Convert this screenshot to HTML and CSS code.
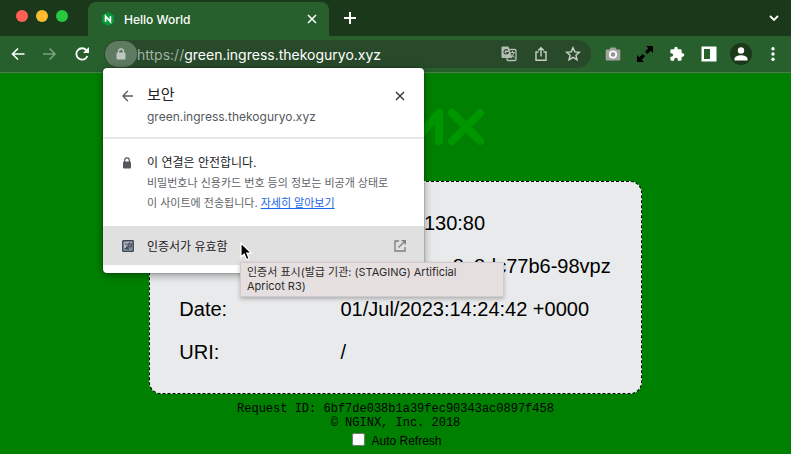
FILE: index.html
```html
<!DOCTYPE html>
<html lang="ko">
<head>
<meta charset="utf-8">
<meta name="viewport" content="width=device-width, initial-scale=1">
<title>Hello World</title>
<link rel="stylesheet" href="styles.css">
</head>
<body>
<header class="browser">
  <div class="tabstrip">
    <div class="lights"><span class="light red"></span><span class="light amber"></span><span class="light lime"></span></div>
    <div class="tab">
      <svg class="favicon" width="14" height="14" viewBox="0 0 14 14"><path d="M7 0l6 3.500v7L7 14 1 10.500v-7z" fill="#059a3b"/><path d="M4.600 9.800V4.300l4.800 5.400V4.200" fill="none" stroke="#fff" stroke-width="1.700"/></svg>
      <span class="tab-title">Hello World</span>
      <button class="icon-btn" aria-label="탭 닫기"><svg width="10" height="10" viewBox="0 0 10 10"><path d="M1 1l8 8M9 1L1 9" stroke="#fff" stroke-width="1.500"/></svg></button>
    </div>
    <button class="icon-btn new-tab" aria-label="새 탭"><svg width="14" height="14" viewBox="0 0 14 14"><path d="M7 1v12M1 7h12" stroke="#fff" stroke-width="2"/></svg></button>
    <button class="icon-btn tab-search" aria-label="탭 검색"><svg width="10" height="8" viewBox="0 0 10 8"><path d="M1 2l4 4 4-4" fill="none" stroke="#fff" stroke-width="1.800"/></svg></button>
  </div>
  <div class="toolbar">
    <nav class="nav">
      <button class="icon-btn" aria-label="뒤로"><svg width="14" height="14" viewBox="0 0 14 14"><path d="M13.500 7H1.500M7 1.500L1.500 7 7 12.500" fill="none" stroke="#fff" stroke-width="1.600"/></svg></button>
      <button class="icon-btn" aria-label="앞으로"><svg width="14" height="14" viewBox="0 0 14 14"><path d="M0 7h12M6.500 1.500L12 7l-5.500 5.500" fill="none" stroke="#7fa082" stroke-width="1.600"/></svg></button>
      <button class="icon-btn" aria-label="새로고침"><svg width="14" height="14" viewBox="0 0 14 14"><path d="M12.400 9A5.700 5.700 0 1 1 11.400 3.200L12.800 4.600" fill="none" stroke="#fff" stroke-width="1.800"/><path d="M14 0v6H8z" fill="#fff"/></svg></button>
    </nav>
    <div class="address">
      <button class="lock-btn" aria-label="사이트 정보 보기"><svg width="10" height="12" viewBox="0 0 10 12"><path d="M2.500 5V3.500a2.500 2.500 0 0 1 5 0V5" fill="none" stroke="#bfc8c0" stroke-width="1.300"/><rect x=".5" y="4.500" width="9" height="7" rx="1" fill="#bfc8c0"/></svg></button>
      <span class="url"><span class="scheme">https://</span>green.ingress.thekoguryo.xyz</span>
      <div class="address-actions">
        <button class="icon-btn" aria-label="번역"><svg width="16" height="16" viewBox="0 0 16 16"><rect x="6" y="3.500" width="9" height="11" rx="1" fill="none" stroke="#b5bdb5" stroke-width="1.300"/><path d="M1.500.5h6L11 12H1.500a1 1 0 0 1-1-1v-9.500a1 1 0 0 1 1-1z" fill="#b5bdb5"/><path d="M6.800 4.300A2.200 2.200 0 1 0 7.300 6.500H5.200" fill="none" stroke="#284a2a" stroke-width="1.100"/><path d="M9 6.500h5M11.500 5v1.500M13 6.500c-.3 2-1.500 3.500-3 4.500M10.500 8.500c.8 1.500 2 2.500 3 3" fill="none" stroke="#b5bdb5" stroke-width="1.100"/></svg></button>
        <button class="icon-btn" aria-label="공유"><svg width="16" height="16" viewBox="0 0 16 16"><path d="M5.500 6H3v8.300h10V6h-2.500M8 10.500V2M5.200 4.500L8 1.700l2.800 2.800" fill="none" stroke="#c8d0c8" stroke-width="1.400"/></svg></button>
        <button class="icon-btn" aria-label="북마크"><svg width="16" height="16" viewBox="0 0 16 16"><path d="M8 1.700l1.800 4.200 4.600.4-3.500 3 1.100 4.500L8 11.400l-4 2.400 1.100-4.500-3.500-3 4.600-.4z" fill="none" stroke="#cbd3cb" stroke-width="1.400"/></svg></button>
      </div>
      <section class="popup" aria-label="보안">
        <div class="popup-head">
          <button class="icon-btn" aria-label="돌아가기"><svg width="12" height="12" viewBox="0 0 12 12"><path d="M11 6H1M5.800 1L.8 6l5 5" fill="none" stroke="#55595e" stroke-width="1.300"/></svg></button>
          <div class="popup-titles"><h2>보안</h2><p class="host">green.ingress.thekoguryo.xyz</p></div>
          <button class="icon-btn popup-close" aria-label="닫기"><svg width="10" height="10" viewBox="0 0 10 10"><path d="M1 1l8 8M9 1L1 9" stroke="#303338" stroke-width="1.400"/></svg></button>
        </div>
        <div class="popup-body">
          <svg class="body-lock" width="10" height="12" viewBox="0 0 10 12"><path d="M2.700 5V3.200a2.300 2.300 0 0 1 4.600 0V5" fill="none" stroke="#54585d" stroke-width="1.200"/><rect x="1" y="4.500" width="8" height="7" rx="1" fill="#54585d"/></svg>
          <div><h3>이 연결은 안전합니다.</h3><p class="detail">비밀번호나 신용카드 번호 등의 정보는 비공개 상태로<br>이 사이트에 전송됩니다. <a href="#">자세히 알아보기</a></p></div>
        </div>
        <div class="cert-wrap">
          <button class="cert">
            <svg width="12" height="12" viewBox="0 0 12 12"><rect x=".8" y=".8" width="10.400" height="10.400" rx=".5" fill="#aeb4bb" stroke="#3e4955" stroke-width="1.500"/><path d="M2.500 9.500V8h1.500V6.500h2V8l1 1.500z" fill="#3e4955"/><circle cx="7.800" cy="5" r="2" fill="#6d7882" stroke="#3e4955"/><path d="M6.800 7v3M9 7v2.500M3 4h2" stroke="#3e4955"/></svg>
            <span>인증서가 유효함</span>
            <svg class="external" width="12" height="12" viewBox="0 0 12 12"><path d="M5 1H1v10h10V7M7.500.7h3.800v3.800M11 1L4.500 7.500" fill="none" stroke="#7a7e83" stroke-width="1.300"/></svg>
          </button>
          <div class="tooltip" role="tooltip">인증서 표시(발급 기관: (STAGING) Artificial Apricot R3)</div>
          <svg class="cursor" width="13" height="19" viewBox="0 0 13 19"><path d="M1 1v14l3.200-3 2.300 5.500 2.600-1.100-2.300-5.300h4.500z" fill="#000" stroke="#fff" stroke-width="1.200"/></svg>
        </div>
      </section>
    </div>
    <div class="extensions">
      <button class="icon-btn" aria-label="스크린샷"><svg width="16" height="16" viewBox="0 0 16 16"><path d="M2 3.500h2.500L5.500 1.500h5l1 2H14a1.300 1.300 0 0 1 1.300 1.300v8.400a1.300 1.300 0 0 1-1.300 1.300H2A1.300 1.300 0 0 1 .7 13.200V4.800A1.300 1.300 0 0 1 2 3.500z" fill="#a3a5a3"/><circle cx="8" cy="8.500" r="3.200" fill="#929492" stroke="#fff" stroke-width="1.800"/></svg></button>
      <button class="icon-btn" aria-label="창 크기"><svg width="16" height="16" viewBox="0 0 16 16"><path d="M9 0h7v7l-2.300-2.300-3.400 3.300-2.300-2.300L11.300 2.300zM0 9l2.300 2.300 3.400-3.300 2.300 2.300L4.700 13.700 7 16H0z" fill="#000"/></svg></button>
      <button class="icon-btn" aria-label="확장 프로그램"><svg width="16" height="16" viewBox="0 0 24 24"><path d="M20.500 11H19V7a2 2 0 0 0-2-2h-4V3.500a2.500 2.500 0 0 0-5 0V5H4a2 2 0 0 0-2 2v3.800h1.500a2.700 2.700 0 0 1 0 5.400H2V20a2 2 0 0 0 2 2h3.800v-1.500a2.700 2.700 0 0 1 5.400 0V22H17a2 2 0 0 0 2-2v-4h1.500a2.500 2.500 0 0 0 0-5z" fill="#fff"/></svg></button>
      <button class="icon-btn" aria-label="사이드 패널"><svg width="16" height="16" viewBox="0 0 16 16"><path d="M.5.500h15v15H.5zM3 3v10h6V3z" fill="#fff" fill-rule="evenodd"/></svg></button>
      <button class="icon-btn avatar" aria-label="프로필"><svg width="14" height="14" viewBox="0 0 14 14"><circle cx="7" cy="3.500" r="3.200" fill="#fff"/><path d="M.5 13.500v-1.600C.5 9.500 4 8.300 7 8.300s6.500 1.200 6.500 3.600v1.600z" fill="#fff"/></svg></button>
      <button class="icon-btn" aria-label="메뉴"><svg width="16" height="16" viewBox="0 0 16 16"><circle cx="8" cy="2.700" r="1.700" fill="#fff"/><circle cx="8" cy="8" r="1.700" fill="#fff"/><circle cx="8" cy="13.300" r="1.700" fill="#fff"/></svg></button>
    </div>
  </div>
</header>
<main class="page">
  <svg class="logo" width="186" height="38" viewBox="-7 0 186 38" role="img" aria-label="NGINX"><g fill="none" stroke="#009600" stroke-width="8" stroke-linecap="round" stroke-linejoin="round"><path d="M5 33V5l25 28V5"/><path d="M72 9C62 3 46 4 46 19s16 17 26 10v-8H60M88 5v28"/><path d="M105 5v28l24-28v28"/><path d="M142 5l28 28M170 5l-28 28"/></g></svg>
  <div class="card">
    <table>
      <tr><th scope="row">Server address:</th><td>10.244.0.130:80</td></tr>
      <tr><th scope="row">Server name:</th><td>nginx-green-8c8dc77b6-98vpz</td></tr>
      <tr><th scope="row">Date:</th><td>01/Jul/2023:14:24:42 +0000</td></tr>
      <tr><th scope="row">URI:</th><td>/</td></tr>
    </table>
  </div>
  <footer>
    <p class="mono">Request ID: 6bf7de038b1a39fec90343ac0897f458<br>© NGINX, Inc. 2018</p>
    <label class="refresh"><input type="checkbox">Auto Refresh</label>
  </footer>
</main>
</body>
</html>
```
FILE: styles.css
```css
* { box-sizing: border-box; }
body {
  margin: 0;
  background: #008000;
  color: #000;
  font-family: "Liberation Sans", Arial, sans-serif;
}
h2, h3, p { margin: 0; font-weight: 400; }
button { font: inherit; color: inherit; background: none; border: 0; padding: 0; }
svg { display: block; flex: none; }
.icon-btn { display: grid; place-items: center; flex: none; }

.browser {
  position: relative;
  font-family: Inter, "Noto Sans CJK KR", sans-serif;
  background: #275f2d;
  border-bottom: 1px solid #4d7c50;
}
.tabstrip {
  display: flex;
  align-items: center;
  height: 36px;
  background: #1b381b;
  padding-right: 12px;
}
.lights { display: flex; gap: 8px; padding: 0 20px 4px 16px; }
.light { width: 12px; height: 12px; border-radius: 50%; }
.red { background: #ff5f57; }
.amber { background: #febc2e; }
.lime { background: #28c840; }
.tab {
  display: flex;
  align-items: center;
  align-self: flex-end;
  width: 241px;
  height: 34px;
  padding: 0 12px 0 13px;
  background: #275f2d;
  border-radius: 8px 8px 0 0;
}
.tab-title { flex: 1; margin-left: 9px; color: #fff; font-size: 12px; font-weight: 500; }
.new-tab { margin-left: 14px; }
.tab-search { margin-left: auto; }

.toolbar {
  display: flex;
  align-items: center;
  height: 36px;
  padding: 0 10px 0 11px;
}
.nav { display: flex; gap: 18px; margin-right: 15px; }
.address {
  position: relative;
  flex: 1;
  display: flex;
  align-items: center;
  height: 28px;
  padding: 0 10px 0 1px;
  border-radius: 14px;
  background: #284a2a;
}
.lock-btn {
  display: grid;
  place-items: center;
  width: 32px;
  height: 26px;
  border-radius: 13px;
  background: #5e7a60;
}
.url { flex: 1; color: #fff; font-size: 14px; white-space: nowrap; }
.scheme { color: #a3b0a4; }
.address-actions { display: flex; gap: 16px; }
.extensions { display: flex; align-items: center; gap: 16px; margin-left: 14px; }
.avatar { width: 22px; height: 22px; margin: 0 -3px; border-radius: 50%; background: #1b381b; }

.popup {
  position: absolute;
  z-index: 2;
  top: 28px;
  left: -1px;
  width: 321px;
  padding-bottom: 8px;
  background: #fff;
  border-radius: 4px;
  color: #202124;
  box-shadow: 0 0 1px #000, 0 2px 8px rgba(0, 0, 0, .4);
}
.popup-head {
  display: flex;
  align-items: flex-start;
  height: 71px;
  padding: 16px 19px 0;
  border-bottom: 2px solid #e8e8ec;
}
.popup-head .icon-btn { height: 24px; }
.popup-titles { flex: 1; margin-left: 13px; }
.popup-titles h2 { font-size: 15px; line-height: 22px; }
.host { color: #55595e; font-size: 12px; line-height: 22px; }
.popup-body { display: flex; gap: 15px; padding: 14px 19px 13px; }
.body-lock { margin-top: 4px; }
.popup-body h3 { font-size: 12px; line-height: 20px; }
.detail { color: #5f6368; font-size: 11px; line-height: 20px; white-space: nowrap; }
.detail a { color: #1a66e8; }
.cert-wrap { position: relative; }
.cert {
  display: flex;
  align-items: center;
  gap: 13px;
  width: 100%;
  height: 39px;
  padding: 0 18px 0 19px;
  background: #e0e0e0;
  font-size: 12px;
}
.external { margin-left: auto; }
.tooltip {
  position: absolute;
  top: 36px;
  left: 137px;
  width: 264px;
  padding: 2px 6px 3px;
  background: #e6dfdf;
  border: 1px solid #d2cbcb;
  box-shadow: 0 2px 4px rgba(0, 0, 0, .25);
  color: #2b2b2b;
  font-size: 11px;
  line-height: 14px;
}
.cursor { position: absolute; top: 16px; left: 137px; }

.page {
  display: flex;
  flex-direction: column;
  align-items: center;
  padding-top: 35px;
}
.logo { margin-bottom: 35px; }
.card {
  padding: 20px 30px 19px 29px;
  border: 1px dashed #000;
  border-radius: 12px;
  background: #e8eaeb;
}
table { border-collapse: collapse; font-size: 20px; line-height: 23px; }
th, td { padding: 10px 0; text-align: left; font-weight: 400; white-space: nowrap; }
th { padding-right: 20px; }
footer { padding-top: 8px; text-align: center; }
.mono { font-family: "Liberation Mono", monospace; font-size: 12px; line-height: 14px; }
.refresh { display: flex; justify-content: center; gap: 6px; font-size: 12px; line-height: 16px; padding: 3px 0 0 3px; }
.refresh input { width: 13px; height: 13px; margin: 0; }
```
